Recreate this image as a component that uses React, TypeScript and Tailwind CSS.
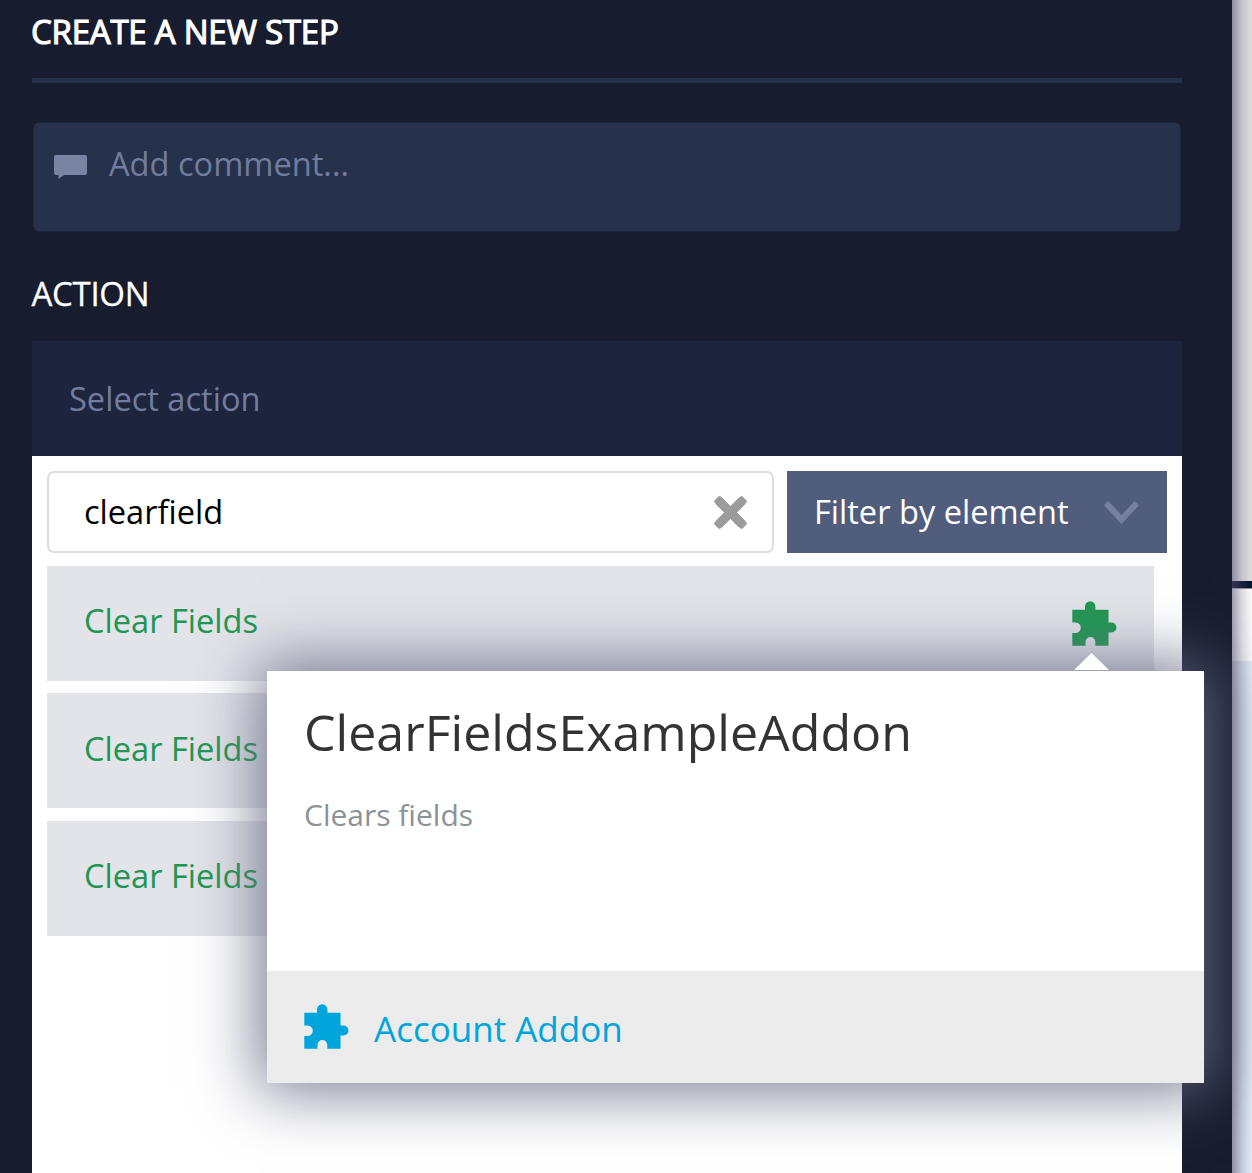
import React from "react";

function PuzzleIcon({ className }: { className: string }) {
  return (
    <svg viewBox="0 0 45 45" className={className} fill="currentColor" aria-hidden="true">
      <path d="M.3 8.8H13V5.4a5.2 5.2 0 0 1 10.4 0V8.8H36.5V21.4H39.4a5 5 0 0 1 0 10.2H36.5V44.7H23.3V41a4.9 4.9 0 0 0-9.8 0V44.7H.3V32H3.5a5.3 5.3 0 0 0 0-10.6H.3Z" />
    </svg>
  );
}

function ActionRow({ addon = false }: { addon?: boolean }) {
  return (
    <div className="flex h-[115px] items-start justify-between bg-[#e2e4e9] px-[37px] text-[#219653]">
      <span className="pt-[31px] text-[32.6px] leading-[48px]">Clear Fields</span>
      {addon && <PuzzleIcon className="mt-[35px] size-[45px]" />}
    </div>
  );
}

function AddonCard() {
  return (
    <aside className="absolute top-[671px] left-[267px] h-[412px] w-[937px] bg-white shadow-[0_0_60px_8px_rgb(103,106,132,0.9)]">
      <svg viewBox="0 0 36 18" className="absolute -top-[18px] left-[806px] h-[18px] w-9" fill="#fff" aria-hidden="true">
        <path d="M1 17 18.5 0 36 17Z" />
      </svg>
      <div className="flex h-[300px] flex-col px-[37px] pt-[25px]">
        <h2 className="text-[50.1px] leading-[72px] text-[#333]">ClearFieldsExampleAddon</h2>
        <p className="pt-[25px] text-[30px] leading-[44px] text-[#8b9396]">Clears fields</p>
      </div>
      <div className="flex h-[112px] items-center bg-[#ececec] pl-[37px] text-[#00a5dc]">
        <PuzzleIcon className="-mt-px size-[45px]" />
        <span className="pt-[3px] pl-[25px] text-[35px] leading-[48px]">Account Addon</span>
      </div>
    </aside>
  );
}

export default function App() {
  return (
    <div className="relative flex h-[1173px] w-[1252px] overflow-hidden bg-[#171d2f] font-['Open_Sans',sans-serif] whitespace-nowrap">
      <main className="flex w-[1232px] shrink-0 flex-col px-8">
        <div className="h-[83px] w-[1150px] border-b-5 border-[#25304b] pt-[9px]">
          <h1 className="-ml-px text-[33px] leading-[46px] font-normal tracking-[-0.24px] text-white [-webkit-text-stroke:1.2px_white]">CREATE A NEW STEP</h1>
        </div>
        <div className="mt-[39px] ml-px flex h-[110px] w-[1148px] rounded-[6px] border border-[#1c263c] bg-[#26314b] pt-[17px] pl-5 text-[#727d9d]">
          <svg viewBox="0 0 33 24" className="mt-[15px] h-6 w-[33px]" fill="#7983a3" aria-hidden="true">
            <path d="M2 0H31Q33 0 33 2V18Q33 20 31 20H10L4.4 24V20H2Q0 20 0 18V2Q0 0 2 0Z" />
          </svg>
          <span className="pl-[22px] text-[32.6px] leading-[48px]">Add comment...</span>
        </div>
        <h2 className="mt-[38px] -ml-[0.5px] text-[33px] leading-[48px] tracking-[-0.3px] text-white [-webkit-text-stroke:0.3px_white]">ACTION</h2>
        <section className="mt-[23px] flex h-[832px] w-[1150px] shrink-0 flex-col bg-white">
          <div className="h-[115px] bg-[#1d243d] pt-[34px] pl-[37px] text-[32.6px] leading-[48px] text-[#727d9d]">Select action</div>
          <div className="mt-[15px] ml-[15px] flex h-[82px] gap-[13px]">
            <div className="flex w-[727px] items-center justify-between rounded-[7px] border-2 border-[#dedede] bg-white pr-[25px] pl-[35px]">
              <span className="text-[32.6px] leading-[48px] text-black">clearfield</span>
              <svg viewBox="0 0 33 33" className="size-[33px]" fill="none" stroke="#9c9c9c" strokeLinejoin="round" aria-hidden="true">
                <path d="m5 5 23 23M28 5 5 28" strokeWidth="9" />
                <path d="m5.5 2.5-3 3 25 25 3-3ZM27.5 2.5l3 3-25 25-3-3Z" strokeWidth="4.5" />
              </svg>
            </div>
            <div className="flex w-[380px] items-center bg-[#515d7d] pl-[27px]">
              <span className="w-[290px] text-[32.6px] leading-[48px] text-white">Filter by element</span>
              <svg viewBox="0 0 35 23" className="h-[23px] w-[35px]" fill="none" stroke="#76809e" strokeWidth="6" aria-hidden="true">
                <path d="M2 2 17.5 18.5 33 2" />
              </svg>
            </div>
          </div>
          <div className="mt-[13px] ml-[15px] flex w-[1107px] flex-col">
            <ActionRow addon />
            <div className="mt-3 mb-[13px] [&_span]:pt-8">
              <ActionRow />
            </div>
            <ActionRow />
          </div>
        </section>
      </main>
      <div className="flex w-5 flex-col">
        <div className="h-[581px] bg-linear-to-r from-[#918da4] via-[#c6c4cd] to-[#dedede]" />
        <div className="h-[7px] bg-linear-to-r from-[#36364f] to-[#00142a]" />
        <div className="h-[73px] border-t border-[#8d8998] bg-linear-to-r from-[#a19db2] via-[#dddbe1] to-[#fbfafb]" />
        <div className="h-[512px] bg-linear-to-r from-[#918fa7] via-[#c4cada] to-[#e2ebf5]" />
      </div>
      <AddonCard />
    </div>
  );
}
